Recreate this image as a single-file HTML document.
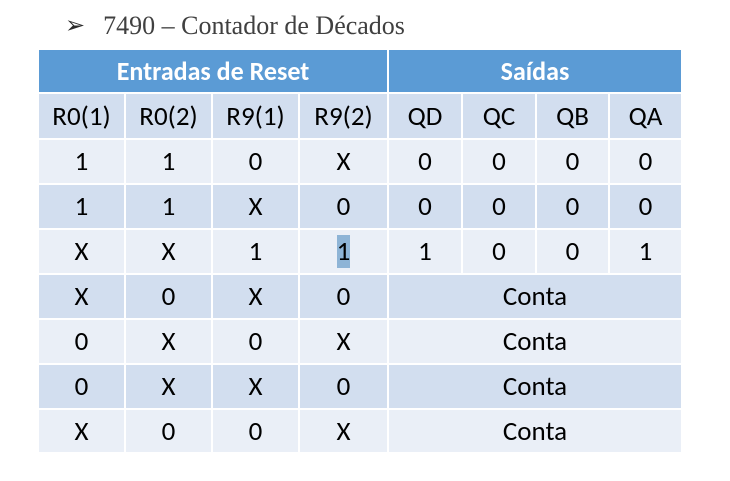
<!DOCTYPE html>
<html><head><meta charset="utf-8"><style>
body{margin:0;width:730px;height:481px;background:#fff;position:relative;overflow:hidden;font-family:"Carlito","Liberation Sans",sans-serif;}
.c{position:absolute;display:flex;align-items:center;justify-content:center;font-size:27px;color:#000;box-sizing:border-box;}
.h{background:#5B9BD5;color:#fff;font-weight:bold;font-size:26px;}
.d{background:#D2DEEF;}
.l{background:#EAEFF7;}
.t{position:absolute;left:65px;top:11px;font-family:"Liberation Serif",serif;font-size:26px;color:#404040;}
</style></head><body>
<div class="t"><span style="font-size:24px;color:#2a2a2a;position:relative;top:-1px">&#10146;</span><span style="margin-left:18px">7490 – Contador de Décados</span></div>
<script>
var X=[38,125,212,299,388,462,536,609,682];
var Y=[49,93,139,184,229,274,319,364,409,453];
var g=document.body;
function cell(x1,x2,y1,y2,cls,txt){var d=document.createElement('div');d.className='c '+cls;d.style.left=(x1+1)+'px';d.style.top=(y1+1)+'px';d.style.width=(x2-x1-2)+'px';d.style.height=(y2-y1-2)+'px';d.innerHTML=txt;g.appendChild(d);}
cell(X[0],X[4],Y[0],Y[1],'h','Entradas de Reset');
cell(X[4],X[8],Y[0],Y[1],'h','Saídas');
var hd=['R0(1)','R0(2)','R9(1)','R9(2)','QD','QC','QB','QA'];
for(var i=0;i<8;i++)cell(X[i],X[i+1],Y[1],Y[2],'d',hd[i]);
var rows=[['1','1','0','X','0','0','0','0'],['1','1','X','0','0','0','0','0'],['X','X','1','<span style="background:#8EB4D6">1</span>','1','0','0','1'],['X','0','X','0','Conta'],['0','X','0','X','Conta'],['0','X','X','0','Conta'],['X','0','0','X','Conta']];
for(var r=0;r<7;r++){var cls=(r%2==0)?'l':'d';var row=rows[r];
for(var i=0;i<4;i++)cell(X[i],X[i+1],Y[r+2],Y[r+3],cls,row[i]);
if(row.length==5)cell(X[4],X[8],Y[r+2],Y[r+3],cls,row[4]);
else for(var i=4;i<8;i++)cell(X[i],X[i+1],Y[r+2],Y[r+3],cls,row[i]);}
</script>
</body></html>
